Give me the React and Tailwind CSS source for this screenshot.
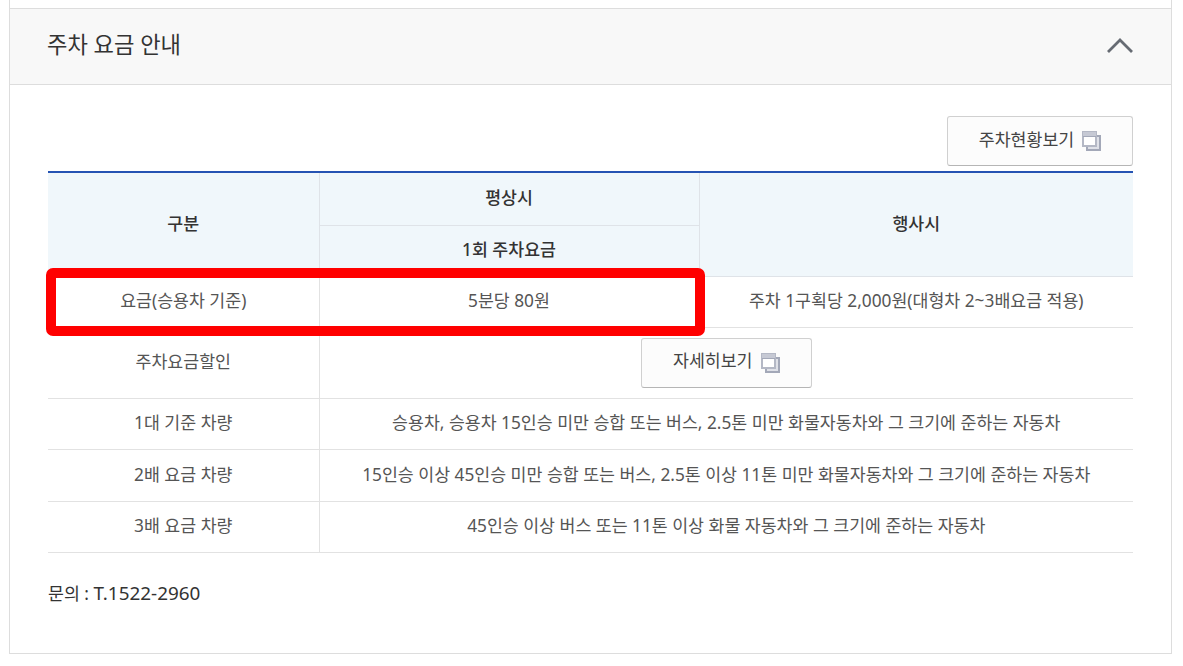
const rows = [
  ['1대 기준 차량', '승용차, 승용차 15인승 미만 승합 또는 버스, 2.5톤 미만 화물자동차와 그 크기에 준하는 자동차', 'h-[51px]'],
  ['2배 요금 차량', '15인승 이상 45인승 미만 승합 또는 버스, 2.5톤 이상 11톤 미만 화물자동차와 그 크기에 준하는 자동차', 'h-[52px]'],
  ['3배 요금 차량', '45인승 이상 버스 또는 11톤 이상 화물 자동차와 그 크기에 준하는 자동차', 'h-[51px]'],
];

function WindowIcon() {
  return (
    <svg width="19" height="20" viewBox="0 0 19 20" className="shrink-0">
      <rect x="5" y="5" width="13" height="14" fill="#dfe1e8" stroke="#a3a8b8" strokeWidth="2" />
      <rect x="1" y="1" width="13" height="14" fill="#fff" stroke="#b4b8c5" strokeWidth="2" />
      <rect x="1" y="1" width="13" height="4" fill="#c6c9d4" />
      <rect x="1" y="5" width="13" height="1" fill="#a3a8b8" />
    </svg>
  );
}

function ViewButton({ label, className }) {
  return (
    <button className={`inline-flex items-center justify-center gap-[8px] h-[50px] rounded-[3px] border border-[#d0d0d0] border-b-[#b5b5b5] bg-[#fcfcfc] text-[17.3px] text-[#444] ${className}`}>
      <span className="-mt-[3px]">{label}</span>
      <WindowIcon />
    </button>
  );
}

export default function App() {
  return (
    <div className="w-[1183px] h-[666px] bg-white overflow-hidden font-['Noto_Sans','Noto_Sans_CJK_KR',sans-serif]">
      <div className="relative mx-[9px] w-[1163px] h-[654px] pt-2 border-x border-b border-[#dddddd]">
        <div className="flex items-center justify-between h-[77px] pl-[37px] pr-[38px] bg-[#f8f8f8] border-y border-[#dddddd]">
          <h2 className="text-[22.2px] font-normal text-[#333] -mt-[4px]">주차 요금 안내</h2>
          <svg width="26" height="15" viewBox="0 0 26 15" fill="none" stroke="#666b73" strokeWidth="2.8" className="-mt-[2px]">
            <path d="M1 14 L13 2 L25 14" />
          </svg>
        </div>

        <div className="pl-[38px] pr-[38px] pt-[31px]">
          <div className="flex justify-end mb-[5px]">
            <ViewButton label="주차현황보기" className="w-[186px]" />
          </div>

          <table className="w-[1085px] table-fixed border-collapse border-t-2 border-[#2553b3] text-[17.3px] text-[#555] text-center">
            <colgroup>
              <col className="w-[271px]" />
              <col className="w-[380px]" />
              <col />
            </colgroup>
            <thead className="bg-[#f0f7fb] text-[#333]">
              <tr className="h-[53px]">
                <th rowSpan={2} className="font-medium border-r border-b border-[#dfe3e8] pb-[1px]">구분</th>
                <th className="font-medium border-r border-b border-[#dfe3e8] pb-[1px]">평상시</th>
                <th rowSpan={2} className="font-medium border-b border-[#dfe3e8] pb-[1px]">행사시</th>
              </tr>
              <tr className="h-[51px]">
                <th className="font-medium border-r border-b border-[#dfe3e8] pb-[1px]">1회 주차요금</th>
              </tr>
            </thead>
            <tbody>
              <tr className="h-[51px] border-b border-[#e2e2e2]">
                <td className="border-r border-[#e2e2e2] pb-[1px]">요금(승용차 기준)</td>
                <td className="border-r border-[#e2e2e2] pb-[1px]">5분당 80원</td>
                <td className="pb-[1px]">주차 1구획당 2,000원(대형차 2~3배요금 적용)</td>
              </tr>
              <tr className="h-[71px] border-b border-[#e2e2e2]">
                <td className="border-r border-[#e2e2e2] pb-[1px]">주차요금할인</td>
                <td colSpan={2}>
                  <ViewButton label="자세히보기" className="w-[171px] align-middle" />
                </td>
              </tr>
              {rows.map(([name, desc, height]) => (
                <tr key={name} className={`${height} border-b border-[#e2e2e2]`}>
                  <td className="border-r border-[#e2e2e2] pb-[1px]">{name}</td>
                  <td colSpan={2} className="pb-[1px]">{desc}</td>
                </tr>
              ))}
            </tbody>
          </table>

          <p className="mt-[28px] text-[17.3px] leading-[24px] text-[#333]">
            문의 : <span className="text-[18.9px]">T.1522-2960</span>
          </p>
        </div>

        {/* red highlight over the fee row */}
        <div className="absolute left-[36px] top-[268px] w-[659px] h-[68px] rounded-[7px] border-[10px] border-[#ff0000]" />
      </div>
    </div>
  );
}
